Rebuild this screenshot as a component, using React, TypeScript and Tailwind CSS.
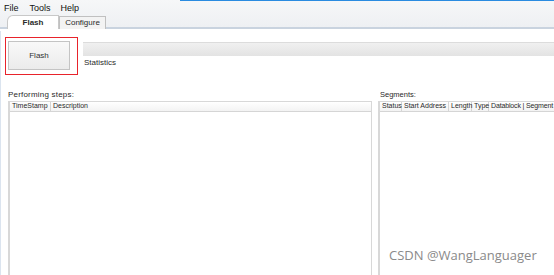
const FONT = { fontFamily: '"Liberation Sans", Arial, sans-serif' };

const ColHead = ({ label, className = '' }: { label: string; className?: string }) => (
  <div className={`h-full shrink-0 flex items-center px-[2px] border-r border-[#d5d5d5] whitespace-nowrap ${className}`}>
    {label}
  </div>
);

export default function App() {
  return (
    <div
      className="relative w-[554px] h-[275px] overflow-hidden bg-white text-[#2a2a2a] text-[8px]"
      style={FONT}
    >
      {/* window chrome */}
      <div className="relative h-[29px] bg-gradient-to-b from-[#f6f7f8] to-[#eef0f3] border-b-2 border-[#c9d3df]">
        <div className="absolute top-0 left-[180px] right-0 h-[1px] bg-[#2a8be0]" />
        <div className="flex items-center h-[16px] pt-[2px] pl-[4px] text-[9px] text-[#111]">
          <span>File</span>
          <span className="ml-[11px]">Tools</span>
          <span className="ml-[10px]">Help</span>
        </div>
        <div className="flex items-end h-[13px] pl-[7px]">
          <div className="h-[14px] w-[52px] bg-white border border-b-0 border-[#c8c8c8] rounded-tl-[6px] flex items-center justify-center font-bold">
            Flash
          </div>
          <div className="h-[13px] w-[47px] bg-[#f3f3f3] border border-b-0 border-[#c0c0c0] flex items-center justify-center">
            Configure
          </div>
        </div>
      </div>

      <div className="absolute left-0 top-[31px] bottom-0 w-[1px] bg-[#dbe4ef]" />

      {/* flash row */}
      <div className="flex items-start pt-[8px]">
        <div className="ml-[5px] shrink-0 w-[73px] h-[38px] border border-[#e8232b] pl-[2px] pt-[3px]">
          <div className="w-[62px] h-[29px] border border-[#c4c4c4] bg-gradient-to-b from-[#f9f9f9] to-[#ebebeb] flex items-center justify-center text-[#333]">
            Flash
          </div>
        </div>
        <div className="flex-1 ml-[5px] pt-[5px]">
          <div className="h-[14px] border-t border-[#dcdcdc] bg-gradient-to-b from-[#f0f0f0] to-[#e3e3e3]" />
          <div className="mt-[1px] pl-[1px]">Statistics</div>
        </div>
      </div>

      {/* tables */}
      <div className="flex mt-[15px] h-[200px]">
        <div className="ml-[8px] shrink-0 w-[364px] flex flex-col">
          <div className="h-[11px] leading-[9px] tracking-[0.2px]">Performing steps:</div>
          <div className="flex-1 border-l-2 border-t border-r border-[#d8d8d8]">
            <div className="h-[10px] flex border-b border-[#d5d5d5] bg-gradient-to-b from-white to-[#f3f3f3] text-[7px]">
              <ColHead label="TimeStamp" className="w-[41px]" />
              <div className="h-full flex items-center px-[2px]">Description</div>
            </div>
          </div>
        </div>
        <div className="ml-[6px] flex-1 min-w-0 flex flex-col">
          <div className="h-[11px] leading-[9px] pl-[2px] text-[7.5px]">Segments:</div>
          <div className="flex-1 border-l-2 border-t border-[#d8d8d8]">
            <div className="h-[10px] flex border-b border-[#d5d5d5] bg-gradient-to-b from-white to-[#f3f3f3] text-[7px]">
              <ColHead label="Status" className="w-[22px]" />
              <ColHead label="Start Address" className="w-[47px]" />
              <ColHead label="Length" className="w-[23px]" />
              <ColHead label="Type" className="w-[17px]" />
              <div className="h-full flex items-center pl-[2px] whitespace-nowrap tracking-[-0.15px]">Datablock | Segment</div>
            </div>
          </div>
        </div>
      </div>

      <div
        className="absolute left-[389px] top-[246px] text-[13px] text-[#8a8a8a]"
        style={{ fontFamily: '"Open Sans", "Noto Sans", sans-serif' }}
      >
        CSDN @WangLanguager
      </div>
    </div>
  );
}
